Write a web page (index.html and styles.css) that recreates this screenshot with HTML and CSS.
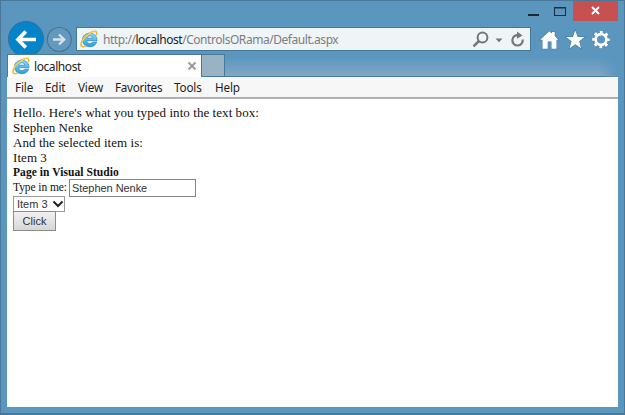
FILE: index.html
```html
<!DOCTYPE html>
<html lang="en">
<head>
<meta charset="utf-8">
<title>localhost</title>
<link rel="stylesheet" href="styles.css">
</head>
<body>
<svg width="0" height="0" class="defs">
  <defs>
    <linearGradient id="blue" x1="0" y1="0" x2="0" y2="1"><stop offset="0" stop-color="#8fdcfa"/><stop offset="1" stop-color="#2b9bdb"/></linearGradient>
    <symbol id="ie" viewBox="0 0 18 18">
      <path d="M17 10.700H6.700C6.900 14 11.300 14.400 12.500 12.200H16.700C14.200 19.200 2.500 18 2.500 9.800C2.500 1 17.300.600 17 10.700zM6.800 8.200H12.800C12.300 5 7.300 5 6.800 8.200z" fill="url(#blue)" fill-rule="evenodd" stroke="#2d83b5" stroke-width=".7"/>
      <path d="M16.300 5.200C17.700 1.500 15.600.1 11.200 2.200C5.300 5 .4 11.200 1 15.200C1.300 17.200 3.500 17 5.800 15.600" fill="none" stroke="#efb92e" stroke-width="1.600"/>
      <path d="M14.800 1.800C11.300 1.700 4.800 6.500 2 11.600" fill="none" stroke="#ffe36d" stroke-width=".8"/>
    </symbol>
  </defs>
</svg>
<div class="window">
  <header class="caption">
    <svg class="minmax" width="60" height="20" viewBox="0 0 60 20"><path d="M10 14h11" stroke="#1c2a35" stroke-width="2"/><path d="M36.500 6.500h11v8h-11zM36 7h12" fill="none" stroke="#20303c" stroke-width="1.100"/></svg>
    <div class="close"><svg width="45" height="20" viewBox="0 0 45 20"><path d="M19 6l7 7M26 6l-7 7" stroke="#fff" stroke-width="1.900"/></svg></div>
  </header>
  <div class="toolbar">
    <svg class="nav" width="68" height="36" viewBox="0 0 68 36">
      <circle cx="19" cy="18" r="17.600" fill="#0584c9" stroke="#376f98" stroke-width="1"/>
      <path d="M10.500 18.500h18.500M18.800 10.500L11 18.500L18.800 26.500" fill="none" stroke="#fff" stroke-width="3.700"/>
      <circle cx="52.300" cy="18.500" r="12" fill="#6498bd" stroke="#467596" stroke-width="1.200"/>
      <path d="M46 18.500h11M52 13.500l5.200 5L52 23.500" fill="none" stroke="#d4e2ed" stroke-width="2.400"/>
    </svg>
    <div class="address">
      <svg width="18" height="18"><use href="#ie"/></svg>
      <span class="url">http://<b>localhost</b>/ControlsORama/Default.aspx</span>
      <svg width="58" height="22" viewBox="0 0 58 22">
        <circle cx="11.500" cy="9.500" r="4.900" fill="none" stroke="#747677" stroke-width="2"/><path d="M8 13L2.500 18.300" stroke="#747677" stroke-width="2.500"/>
        <path d="M24.500 10.500h7l-3.500 3.700z" fill="#747677"/>
        <path d="M47.500 7.200A5.200 5.200 0 1 0 51.700 11.500" fill="none" stroke="#747677" stroke-width="2.200"/><path d="M46 3.500l5.500 4-5.500 3.300z" fill="#747677"/>
      </svg>
    </div>
    <svg class="commands" width="76" height="24" viewBox="0 0 76 24">
      <g fill="#fff" stroke="#43789d" stroke-width="1.100" paint-order="stroke">
        <path d="M4.500 12.700v9h5.200V14.500h3.800v7.200h5v-9h1.800L16.700 9V5h-2.700v1.500L11.300 4.200L2.200 12.700z"/>
        <path d="M37.300 3.500l2.400 6.400 6.800.1-5.300 4.200 1.900 7-5.800-4-5.700 4 2-7-5.500-4.200 6.800-.1z"/>
      </g>
      <g fill="none" transform="translate(63 12.500)">
        <circle r="7.500" stroke="#43789d" stroke-width="3.400" stroke-dasharray="4 1.890" stroke-dashoffset="2"/>
        <circle r="5.400" stroke="#fff" stroke-width="2.700"/>
        <circle r="7.500" stroke="#fff" stroke-width="2.600" stroke-dasharray="3 2.890" stroke-dashoffset="1.500"/>
      </g>
    </svg>
  </div>
  <div class="tabs">
    <div class="tab"><svg width="18" height="18"><use href="#ie"/></svg><span>localhost</span><svg width="10" height="10" viewBox="0 0 10 10"><path d="M1.500 1.500l7 7M8.500 1.500l-7 7" stroke="#9b9b9b" stroke-width="2"/></svg></div>
    <div class="newtab"></div>
    <div class="haze"></div>
  </div>
  <nav class="menu"><span class="file">File</span><span class="edit">Edit</span><span class="view">View</span><span class="favorites">Favorites</span><span class="extras">Tools</span><span class="help">Help</span></nav>
  <main class="page">
    <p>Hello. Here's what you typed into the text box:</p>
    <p>Stephen Nenke</p>
    <p>And the selected item is:</p>
    <p>Item 3</p>
    <h1>Page in Visual Studio</h1>
    <div class="field"><label for="name">Type in me:</label><input id="name" type="text" value="Stephen Nenke"></div>
    <div class="select"><span>Item 3</span><svg width="12" height="10" viewBox="0 0 12 10"><path d="M1.500 2.500l4.500 4.500 4.500-4.500" fill="none" stroke="#222" stroke-width="2"/></svg></div>
    <button>Click</button>
  </main>
</div>
</body>
</html>
```
FILE: styles.css
```css
* { box-sizing: border-box; }
body { margin: 0; overflow: hidden; }
.defs { position: absolute; }
.window {
  width: 625px; height: 415px; padding: 0 6px 6px;
  border: 1px solid #4b7798; border-bottom-width: 2px;
  background: #5b96bf;
  font-family: "Noto Sans", sans-serif; font-size: 12px;
  display: flex; flex-direction: column;
}
svg { display: block; flex: none; }
.caption { height: 20px; flex: none; display: flex; justify-content: flex-end; }
.minmax { margin-right: -5px; }
.close { width: 45px; height: 20px; background: #c75050; }
.toolbar { height: 33px; flex: none; display: flex; }
.nav { margin-right: 1px; }
.address {
  width: 455px; height: 24px; margin: 6px 7px 0 0; padding: 0 1px 0 3px;
  border: 1px solid #467798; background: #eff4f7;
  display: flex; align-items: center; flex: none;
}
.url { flex: 1; margin-left: 5px; color: #7b7e80; white-space: nowrap; letter-spacing: -0.45px; }
.url b { font-weight: 400; color: #222; }
.commands { margin-top: 6px; }
.tabs { height: 23px; flex: none; display: flex; position: relative; }
.tab {
  width: 195px; background: #fff; border: 1px solid #4b7798; border-bottom: 0;
  display: flex; align-items: center; padding: 0 4px; color: #222;
}
.tab span { flex: 1; margin-left: 4px; letter-spacing: -0.42px; }
.newtab { width: 23px; background: #9ab3c2; border: 1px solid #4b7798; border-left: 0; }
.haze {
  flex: 1; border-bottom: 1px solid #467798;
  background: linear-gradient(#5b96bf 15%, #83a8c3);
  -webkit-mask-image: linear-gradient(90deg, #000 95%, transparent);
}
.menu {
  height: 22px; flex: none; display: flex; align-items: center; padding: 0 8px;
  background: #f7f7f7; border-bottom: 2px solid #b0b0b0; color: #1e1e1e; font-size: 11.7px;
}
.menu span { flex: none; letter-spacing: -0.15px; }
.file { width: 30px; }
.edit { width: 33px; }
.view { width: 37px; }
.menu .favorites { width: 59px; letter-spacing: -0.3px; }
.extras { width: 41px; }
.page {
  flex: 1; background: #fff; padding: 6px; color: #111;
  font-family: "Liberation Serif", serif; font-size: 13px; line-height: 15px;
}
.page p, .page h1 { margin: 0; letter-spacing: 0.06px; }
.page h1 { font-size: 11.5px; line-height: 14px; }
.field { display: flex; align-items: center; height: 17px; font-size: 11.5px; }
.field label { width: 56px; white-space: nowrap; flex: none; letter-spacing: -0.08px; }
.field input {
  width: 127px; height: 18px; padding: 0 2px; border: 1px solid #858585; border-radius: 0;
  background: #fff; color: #333; font: 11px "Liberation Sans", sans-serif; letter-spacing: -0.05px;
}
.select {
  width: 52px; height: 16px; border: 1px solid #999; padding-left: 3px;
  display: flex; align-items: center; font: 11px "Liberation Sans", sans-serif; color: #333;
}
.select span { flex: 1; white-space: nowrap; }
button {
  display: block; width: 43px; height: 20px; margin-top: -1px; padding: 0; border: 1px solid #8c8c8c; border-radius: 0;
  background: linear-gradient(#f1f1f1, #d6d6d6); font: 11px "Liberation Sans", sans-serif; color: #333;
}
```
